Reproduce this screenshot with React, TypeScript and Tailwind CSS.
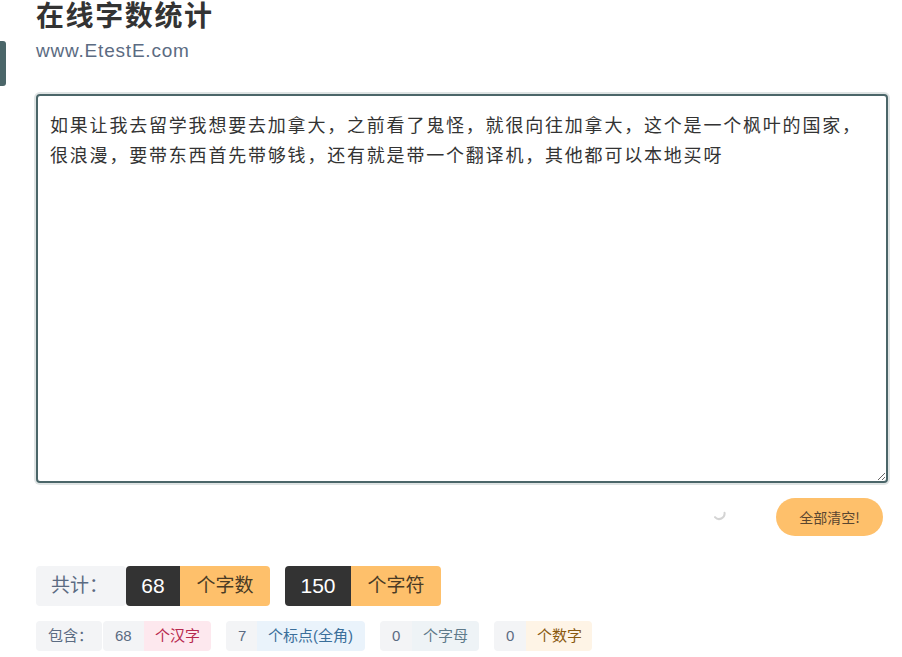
import React, { useState } from "react";

const FONT = { fontFamily: '"Liberation Sans", "Noto Sans CJK SC", sans-serif' };

const TEXT =
  "如果让我去留学我想要去加拿大，之前看了鬼怪，就很向往加拿大，这个是一个枫叶的国家，很浪漫，要带东西首先带够钱，还有就是带一个翻译机，其他都可以本地买呀";

export default function App() {
  const [text, setText] = useState(TEXT);
  return (
    <div className="min-h-[657px] w-[902px] bg-white text-[#333]" style={FONT}>
      <div className="flex">
        <div className="mt-[41px] h-[45px] w-[6px] rounded-r-[3px] bg-[#4b6669]" />
        <div className="ml-[30px] flex flex-col">
          <h1 className="text-[28px] font-bold leading-[33px] tracking-[1.6px] text-[#333]">在线字数统计</h1>
          <div className="mt-[6px] text-[19px] leading-[24px] tracking-[0.8px] text-[#5b6b82]">www.EtestE.com</div>
        </div>
      </div>

      <div className="pl-[36px] pr-[14px] pt-[8px]">
        <textarea
          value={text}
          onChange={(e) => setText(e.target.value)}
          className="block h-[389px] w-full resize-y rounded-[4px] border-2 border-[#4b6669] bg-white px-[12px] pt-[13px] text-[18px] leading-[30px] tracking-[1.8px] text-[#333] shadow-[0_0_0_2px_#dfe4e4] outline-none"
          style={{ fontFamily: '"Noto Sans CJK SC", sans-serif' }}
        />

        <div className="mt-[15px] flex items-center justify-end pr-[5px]">
          <svg width="14" height="14" viewBox="0 0 14 14" className="mr-[48px]">
            <path d="M7 1.5 A5.5 5.5 0 0 1 2.5 11" fill="none" stroke="#d4d4d4" strokeWidth="2" strokeLinecap="round" transform="rotate(40 7 7)" />
          </svg>
          <button className="h-[38px] w-[107px] rounded-full bg-[#fec06b] text-[14px] text-[#5a4630]" style={{ fontFamily: '"Noto Sans CJK SC", sans-serif' }}>
            全部清空!
          </button>
        </div>

        <div className="mt-[30px] flex items-center">
          <div className="flex h-[40px] w-[90px] items-center rounded-[4px] bg-[#f3f4f6] pl-[15px] text-[19px] text-[#5b6b82]">共计：</div>
          <div className="flex h-[40px] w-[54px] items-center justify-center rounded-l-[4px] bg-[#333] text-[21px] text-white">68</div>
          <div className="flex h-[40px] w-[90px] items-center justify-center rounded-r-[4px] bg-[#fec06b] text-[19px] text-[#4a3b25]">个字数</div>
          <div className="ml-[15px] flex h-[40px] w-[66px] items-center justify-center rounded-l-[4px] bg-[#333] text-[21px] text-white">150</div>
          <div className="flex h-[40px] w-[90px] items-center justify-center rounded-r-[4px] bg-[#fec06b] text-[19px] text-[#4a3b25]">个字符</div>
        </div>

        <div className="mt-[15px] flex items-center text-[15px]">
          <div className="flex h-[30px] w-[66px] items-center rounded-[4px] bg-[#f3f4f6] pl-[12px] text-[#5b6b82]">包含：</div>
          <div className="ml-[1px] flex h-[30px] w-[41px] items-center rounded-l-[4px] bg-[#f3f4f6] pl-[12px] text-[#5b6b82]">68</div>
          <div className="flex h-[30px] w-[67px] items-center rounded-r-[4px] bg-[#fde8ee] pl-[11px] text-[#b8294f]">个汉字</div>
          <div className="ml-[15px] flex h-[30px] w-[31px] items-center rounded-l-[4px] bg-[#f3f4f6] pl-[12px] text-[#5b6b82]">7</div>
          <div className="flex h-[30px] w-[108px] items-center rounded-r-[4px] bg-[#eaf3fb] pl-[11px] text-[#3a6f9a]">个标点(全角)</div>
          <div className="ml-[15px] flex h-[30px] w-[32px] items-center rounded-l-[4px] bg-[#f3f4f6] pl-[12px] text-[#5b6b82]">0</div>
          <div className="flex h-[30px] w-[67px] items-center rounded-r-[4px] bg-[#eef3f6] pl-[11px] text-[#5f7a8a]">个字母</div>
          <div className="ml-[15px] flex h-[30px] w-[32px] items-center rounded-l-[4px] bg-[#f3f4f6] pl-[12px] text-[#5b6b82]">0</div>
          <div className="flex h-[30px] w-[66px] items-center rounded-r-[4px] bg-[#fef4e6] pl-[11px] text-[#8a5a10]">个数字</div>
        </div>
      </div>
    </div>
  );
}
